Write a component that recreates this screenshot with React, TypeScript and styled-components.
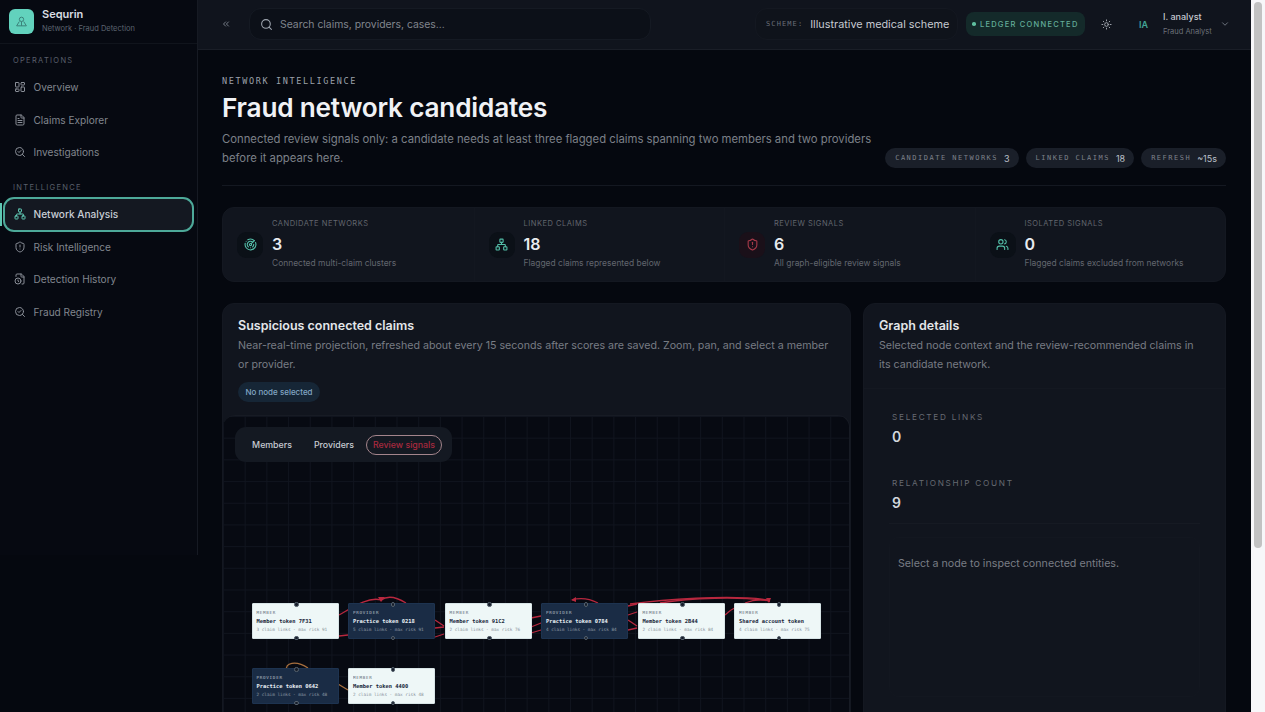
import React from "react";
import styled, { createGlobalStyle } from "styled-components";
import { LayoutDashboard, FileText, SearchCheck, Network, ShieldAlert, FileClock, Search, Sun, ChevronDown, ChevronsLeft, Users, Radar } from "lucide-react";

const sans = `"Inter", "Liberation Sans", sans-serif`;
const mono = `"DejaVu Sans Mono", "Liberation Mono", monospace`;

const Global = createGlobalStyle`
  html { background: #05080f; }
  body { margin: 0; background: #05080f; font-family: ${sans}; color: #e8ebf0; }
  * { box-sizing: border-box; }
`;

const Viewport = styled.div`
  height: 100vh;
  display: grid;
  grid-template-columns: 1fr 14px;
  overflow: hidden;
`;

const ScrollTrack = styled.div`
  background: #f7f7f9;
  padding: 2px 3px 0;
`;

const ScrollThumb = styled.div`
  height: 546px;
  border-radius: 4px;
  background: #c2c2c2;
`;

const Shell = styled.div`
  display: grid;
  grid-template-columns: 198px 1fr;
  min-height: 925px;
  align-items: start;
`;

const Sidebar = styled.aside`
  height: 555px;
  border-right: 1px solid #161a23;
  background: #060911;
`;

const Brand = styled.div`
  height: 44px;
  display: flex;
  align-items: center;
  gap: 8px;
  padding: 0 9px 1px;
  border-bottom: 1px solid #10141c;
`;

const LogoBox = styled.div`
  width: 25px;
  height: 25px;
  border-radius: 6px;
  background: #62d2bd;
  display: flex;
  align-items: center;
  justify-content: center;
  color: #3a8078;
`;

const BrandText = styled.div`
  display: flex;
  flex-direction: column;
  gap: 3px;
`;

const BrandName = styled.div`
  font-size: 11px;
  font-weight: 600;
  color: #d9dde3;
  line-height: 13px;
`;

const BrandSub = styled.div`
  font-size: 7.5px;
  color: #5c6470;
  line-height: 10px;
`;

const NavSection = styled.div<{ $top: number }>`
  padding-top: ${(p) => p.$top}px;
`;

const NavLabel = styled.div`
  font-size: 7.5px;
  letter-spacing: 1.3px;
  color: #595f6b;
  padding-left: 13px;
  line-height: 10px;
  height: 15px;
  text-transform: uppercase;
`;

const NavItem = styled.div<{ $active?: boolean }>`
  position: relative;
  height: 32.5px;
  display: flex;
  align-items: center;
  gap: 7.5px;
  padding-left: 14px;
  font-size: 10.1px;
  font-weight: ${(p) => (p.$active ? 500 : 400)};
  color: ${(p) => (p.$active ? "#c9ced6" : "#81868e")};
  svg { color: ${(p) => (p.$active ? "#5fc7b3" : "#8a8f98")}; flex: none; position: relative; }
  span { position: relative; }
  ${(p) =>
    p.$active &&
    `
    &::before {
      content: "";
      position: absolute;
      left: 3px;
      right: 3px;
      top: -1.5px;
      bottom: -1px;
      border: 2px solid #4da999;
      border-radius: 11px;
      background: #141821;
    }
    &::after {
      content: "";
      position: absolute;
      left: 0;
      top: 5px;
      bottom: 5px;
      width: 1.5px;
      background: #5fc7b3;
    }
  `}
`;

const Main = styled.div`
  min-width: 0;
`;

const Topbar = styled.header`
  height: 50px;
  background: #10141d;
  border-bottom: 1px solid #1a1e27;
  display: flex;
  align-items: center;
  padding: 0 21px 1px 23px;
`;

const Collapse = styled.div`
  color: #8a919c;
  width: 28px;
  display: flex;
  svg { display: block; }
`;

const SearchBox = styled.div`
  width: 402px;
  height: 32px;
  border-radius: 12px;
  background: #0c1018;
  border: 1px solid #151a23;
  display: flex;
  align-items: center;
  gap: 7px;
  padding-left: 10px;
  font-size: 10.4px;
  color: #80858d;
  svg { color: #9ea5af; }
`;

const TopRight = styled.div`
  margin-left: auto;
  display: flex;
  align-items: center;
`;

const Scheme = styled.div`
  width: 203px;
  height: 32px;
  border-radius: 12px;
  background: #0f131b;
  border: 1px solid #141821;
  display: flex;
  align-items: center;
  gap: 7px;
  padding-left: 10px;
`;

const SchemeKey = styled.span`
  font-family: ${mono};
  font-size: 7px;
  letter-spacing: 1.1px;
  color: #6a6f78;
`;

const SchemeVal = styled.span`
  font-size: 10.85px;
  color: #c6cad1;
  white-space: nowrap;
`;

const Ledger = styled.div`
  margin-left: 8px;
  width: 119px;
  height: 24px;
  border-radius: 8px;
  background: #142a2a;
  display: flex;
  align-items: center;
  justify-content: center;
  gap: 4px;
  font-size: 7.5px;
  font-weight: 500;
  letter-spacing: 1.25px;
  color: #63ad99;
  white-space: nowrap;
`;

const Dot = styled.span`
  width: 3.5px;
  height: 3.5px;
  border-radius: 50%;
  background: #5fbf9f;
`;

const SunWrap = styled.div`
  margin-left: 16px;
  width: 12px;
  display: flex;
  color: #a6acb5;
`;

const Initials = styled.div`
  margin-left: 26px;
  width: 24px;
  font-size: 9px;
  font-weight: 600;
  color: #41a597;
`;

const User = styled.div`
  width: 56px;
  display: flex;
  flex-direction: column;
  gap: 5px;
`;

const UserName = styled.div`
  font-size: 9px;
  font-weight: 500;
  line-height: 11px;
  color: #c6cad1;
`;

const UserRole = styled.div`
  font-size: 7.5px;
  line-height: 10px;
  color: #6c7179;
  white-space: nowrap;
`;

const Caret = styled.div`
  margin-left: 1px;
  display: flex;
  color: #7d848f;
`;

const Content = styled.main`
  padding: 26px 25px 0 24px;
`;

const Eyebrow = styled.div`
  font-family: ${mono};
  font-size: 8.5px;
  letter-spacing: 1.63px;
  line-height: 10px;
  color: #9ba1aa;
`;

const Header = styled.div`
  display: flex;
  justify-content: space-between;
  align-items: flex-end;
  padding-bottom: 17px;
  border-bottom: 1px solid #141821;
`;

const HeaderText = styled.div`
  width: 660px;
`;

const Title = styled.h1`
  margin: 4px 0 4px;
  font-size: 26.2px;
  font-weight: 600;
  line-height: 36px;
  color: #f0f2f5;
  letter-spacing: -0.2px;
`;

const Lead = styled.p`
  margin: 0;
  font-size: 11.3px;
  line-height: 19px;
  color: #7c8088;
`;

const Pills = styled.div`
  display: flex;
  gap: 7px;
`;

const Pill = styled.div`
  height: 20px;
  border-radius: 10px;
  background: #1a1f29;
  display: flex;
  align-items: center;
  gap: 6px;
  padding: 0 9px 0 10px;
`;

const PillKey = styled.span`
  font-family: ${mono};
  font-size: 7px;
  letter-spacing: 1.5px;
  color: #7d8189;
  white-space: nowrap;
`;

const PillVal = styled.span`
  font-size: 9px;
  color: #bcc1c9;
  white-space: nowrap;
`;

const Stats = styled.section`
  margin-top: 21px;
  height: 75px;
  border-radius: 12px;
  background: #11151e;
  border: 1px solid #141821;
  display: grid;
  grid-template-columns: repeat(4, 1fr);
`;

const Stat = styled.div<{ $first?: boolean }>`
  display: flex;
  align-items: center;
  gap: 9px;
  padding-left: 14px;
  border-left: ${(p) => (p.$first ? "none" : "1px solid #131720")};
`;

const StatIcon = styled.div<{ $danger?: boolean }>`
  width: 26px;
  height: 26px;
  border-radius: 9px;
  flex: none;
  display: flex;
  align-items: center;
  justify-content: center;
  background: ${(p) => (p.$danger ? "#1a1019" : "#0b1017")};
  color: ${(p) => (p.$danger ? "#a83a4a" : "#54bfa9")};
`;

const StatBody = styled.div`
  display: flex;
  flex-direction: column;
  padding-bottom: 2px;
`;

const StatLabel = styled.div`
  font-size: 7.5px;
  letter-spacing: 0.5px;
  line-height: 10px;
  color: #62666e;
`;

const StatValue = styled.div`
  font-size: 16px;
  font-weight: 600;
  line-height: 22px;
  margin: 4px 0 3px;
  color: #e8ebef;
`;

const StatSub = styled.div`
  font-size: 8.45px;
  line-height: 10px;
  color: #62666e;
  white-space: nowrap;
`;

const Columns = styled.div`
  margin-top: 21px;
  display: grid;
  grid-template-columns: 629px 363px;
  gap: 12px;
`;

const Panel = styled.section`
  border-radius: 12px 12px 0 0;
  background: #11151e;
  border: 1px solid #141821;
  height: 600px;
  overflow: hidden;
`;

const PanelHead = styled.div<{ $side?: boolean }>`
  padding: 13px ${(p) => (p.$side ? "24px" : "15px")} 0 15px;
  height: ${(p) => (p.$side ? "84px" : "111px")};
`;

const PanelTitle = styled.h2`
  margin: 0;
  font-size: 12.5px;
  font-weight: 600;
  line-height: 17px;
  color: #e3e6ea;
`;

const PanelDesc = styled.p`
  margin: 2px 0 0;
  font-size: 10.65px;
  line-height: 19px;
  color: #787c84;
`;

const Chip = styled.div`
  margin-top: 8px;
  width: 82px;
  height: 20px;
  border-radius: 10px;
  background: #162636;
  display: flex;
  align-items: center;
  justify-content: center;
  font-size: 8px;
  font-weight: 500;
  color: #82a6c4;
  white-space: nowrap;
`;

const Canvas = styled.div`
  position: relative;
  height: 400px;
  border-radius: 12px 12px 0 0;
  border-top: 1px solid #171b24;
  border-right: 1px solid #171b24;
  background-color: #070a12;
  background-image:
    linear-gradient(#10141e 1px, transparent 1px),
    linear-gradient(90deg, #10141e 1px, transparent 1px);
  background-size: 21.7px 21.7px;
`;

const Toolbar = styled.div`
  position: absolute;
  left: 12px;
  top: 11px;
  width: 217px;
  height: 35px;
  border-radius: 11px;
  background: #141922;
  display: flex;
  align-items: center;
  padding-left: 7px;
`;

const ToolBtn = styled.div<{ $w: number; $danger?: boolean }>`
  width: ${(p) => p.$w}px;
  height: 20px;
  margin-right: ${(p) => (p.$danger ? 0 : 1)}px;
  display: flex;
  align-items: center;
  justify-content: center;
  font-size: 8.8px;
  font-weight: 500;
  white-space: nowrap;
  color: ${(p) => (p.$danger ? "#a8293f" : "#c8ccd3")};
  border-radius: 10px;
  border: ${(p) => (p.$danger ? "1px solid #a4858c" : "1px solid transparent")};
`;

const EdgeLayer = styled.svg`
  position: absolute;
  inset: 0;
  width: 100%;
  height: 100%;
  pointer-events: none;
`;

const GraphNode = styled.div<{ $dark?: boolean }>`
  position: absolute;
  width: 87px;
  height: 36px;
  border-radius: 1px;
  padding: 6px 4px 0;
  font-family: ${mono};
  background: ${(p) => (p.$dark ? "#1a2c45" : "#eef7f7")};
  color: ${(p) => (p.$dark ? "#eaf1f6" : "#17263a")};
  border: 1px solid ${(p) => (p.$dark ? "#1d3350" : "#d7e4e6")};
  &::before, &::after {
    content: "";
    position: absolute;
    left: 41.5px;
    width: 2.5px;
    height: 2.5px;
    border-radius: 50%;
    background: #161d2a;
    border: 0.5px solid #56626e;
  }
  &::before { top: -2px; }
  &::after { bottom: -2px; }
`;

const NodeKind = styled.div`
  font-size: 4.2px;
  letter-spacing: 0.75px;
  line-height: 6px;
  opacity: 0.7;
`;

const NodeName = styled.div`
  font-size: 5.4px;
  font-weight: 700;
  line-height: 10px;
  white-space: nowrap;
`;

const NodeMeta = styled.div`
  font-size: 4.35px;
  line-height: 8px;
  opacity: 0.5;
  white-space: nowrap;
`;

const SideStats = styled.div`
  border-top: 1px solid #141821;
`;

const SideStat = styled.div`
  height: 66px;
  padding: 23px 0 0 28px;
`;

const SideLabel = styled.div`
  font-size: 8.2px;
  letter-spacing: 1.73px;
  line-height: 11px;
  color: #666a72;
`;

const SideValue = styled.div`
  font-size: 14px;
  font-weight: 600;
  line-height: 18px;
  margin-top: 5px;
  color: #d3d7dc;
`;

const SideDivider = styled.div`
  height: 1px;
  margin: 2px 25px 0;
  background: #161a23;
`;

const EmptyBox = styled.div`
  margin: 13px 25px 0;
  height: 160px;
  padding: 19px 8px;
  border: 1px solid #131720;
  border-radius: 10px;
  font-size: 10.7px;
  line-height: 14px;
  color: #797d85;
`;

const LogoIcon = () => (
  <svg width="13" height="13" viewBox="0 0 24 24" fill="none" stroke="currentColor" strokeWidth="1.8">
    <circle cx="12" cy="8" r="4" />
    <path d="M3 20l5-8M21 20l-5-8M3 20h18M12 12v8" />
  </svg>
);

const nodes = [
  { x: 251.5, y: 603, dark: false, kind: "MEMBER", name: "Member token 7F31", meta: "3 claim links · max risk 91" },
  { x: 348, y: 603, dark: true, kind: "PROVIDER", name: "Practice token 0218", meta: "5 claim links · max risk 91" },
  { x: 444.5, y: 603, dark: false, kind: "MEMBER", name: "Member token 91C2", meta: "2 claim links · max risk 76" },
  { x: 541, y: 603, dark: true, kind: "PROVIDER", name: "Practice token 0784", meta: "4 claim links · max risk 84" },
  { x: 637.5, y: 603, dark: false, kind: "MEMBER", name: "Member token 2B44", meta: "2 claim links · max risk 84" },
  { x: 734, y: 603, dark: false, kind: "MEMBER", name: "Shared account token", meta: "4 claim links · max risk 75" },
  { x: 251.5, y: 668, dark: true, kind: "PROVIDER", name: "Practice token 0642", meta: "2 claim links · max risk 48" },
  { x: 348, y: 668, dark: false, kind: "MEMBER", name: "Member token 4400", meta: "2 claim links · max risk 48" },
];

const redEdges = [
  "M339 615 C350 609 368 596 381 600",
  "M381 600 C388 595 398 598 406 603",
  "M339 636 L348 635",
  "M435 620 L444 626",
  "M435 628 L444 627",
  "M435 637 L444 634",
  "M531 618 L541 616",
  "M531 627 L541 623",
  "M531 633 L541 630",
  "M598 603 C590 599 582 597 572 600",
  "M628 606 L637 604",
  "M628 615 L637 612",
  "M628 620 L637 626",
  "M628 630 L637 628",
  "M630 604 C660 600 730 594 768 600",
  "M660 603 C690 598 740 596 770 601",
  "M725 615 C730 610 734 608 738 606",
  "M745 603 C755 599 762 599 770 601",
];

const brownEdges = ["M287 670 C284 663 296 660 308 668", "M338 684 L348 690"];

const origin = { x: 223, y: 416 };

export default function App() {
  return (
    <Viewport>
      <Global />
      <Shell>
        <Sidebar>
          <Brand>
            <LogoBox>
              <LogoIcon />
            </LogoBox>
            <BrandText>
              <BrandName>Sequrin</BrandName>
              <BrandSub>Network · Fraud Detection</BrandSub>
            </BrandText>
          </Brand>
          <NavSection $top={12}>
            <NavLabel>Operations</NavLabel>
            <NavItem><LayoutDashboard size={12} /><span>Overview</span></NavItem>
            <NavItem><FileText size={12} /><span>Claims Explorer</span></NavItem>
            <NavItem><SearchCheck size={12} /><span>Investigations</span></NavItem>
          </NavSection>
          <NavSection $top={14.5}>
            <NavLabel>Intelligence</NavLabel>
            <NavItem $active><Network size={12} /><span>Network Analysis</span></NavItem>
            <NavItem><ShieldAlert size={12} /><span>Risk Intelligence</span></NavItem>
            <NavItem><FileClock size={12} /><span>Detection History</span></NavItem>
            <NavItem><SearchCheck size={12} /><span>Fraud Registry</span></NavItem>
          </NavSection>
        </Sidebar>
        <Main>
          <Topbar>
            <Collapse><ChevronsLeft size={10} /></Collapse>
            <SearchBox><Search size={13} />Search claims, providers, cases...</SearchBox>
            <TopRight>
              <Scheme>
                <SchemeKey>SCHEME:</SchemeKey>
                <SchemeVal>Illustrative medical scheme</SchemeVal>
              </Scheme>
              <Ledger><Dot />LEDGER CONNECTED</Ledger>
              <SunWrap><Sun size={11} /></SunWrap>
              <Initials>IA</Initials>
              <User>
                <UserName>I. analyst</UserName>
                <UserRole>Fraud Analyst</UserRole>
              </User>
              <Caret><ChevronDown size={10} /></Caret>
            </TopRight>
          </Topbar>
          <Content>
            <Header>
              <HeaderText>
                <Eyebrow>NETWORK INTELLIGENCE</Eyebrow>
                <Title>Fraud network candidates</Title>
                <Lead>
                  Connected review signals only: a candidate needs at least three flagged claims spanning two members and two providers before it appears here.
                </Lead>
              </HeaderText>
              <Pills>
                <Pill><PillKey>CANDIDATE NETWORKS</PillKey><PillVal>3</PillVal></Pill>
                <Pill><PillKey>LINKED CLAIMS</PillKey><PillVal>18</PillVal></Pill>
                <Pill><PillKey>REFRESH</PillKey><PillVal>~15s</PillVal></Pill>
              </Pills>
            </Header>
            <Stats>
              <Stat $first>
                <StatIcon><Radar size={13} /></StatIcon>
                <StatBody>
                  <StatLabel>CANDIDATE NETWORKS</StatLabel>
                  <StatValue>3</StatValue>
                  <StatSub>Connected multi-claim clusters</StatSub>
                </StatBody>
              </Stat>
              <Stat>
                <StatIcon><Network size={13} /></StatIcon>
                <StatBody>
                  <StatLabel>LINKED CLAIMS</StatLabel>
                  <StatValue>18</StatValue>
                  <StatSub>Flagged claims represented below</StatSub>
                </StatBody>
              </Stat>
              <Stat>
                <StatIcon $danger><ShieldAlert size={13} /></StatIcon>
                <StatBody>
                  <StatLabel>REVIEW SIGNALS</StatLabel>
                  <StatValue>6</StatValue>
                  <StatSub>All graph-eligible review signals</StatSub>
                </StatBody>
              </Stat>
              <Stat>
                <StatIcon><Users size={13} /></StatIcon>
                <StatBody>
                  <StatLabel>ISOLATED SIGNALS</StatLabel>
                  <StatValue>0</StatValue>
                  <StatSub>Flagged claims excluded from networks</StatSub>
                </StatBody>
              </Stat>
            </Stats>
            <Columns>
              <Panel>
                <PanelHead>
                  <PanelTitle>Suspicious connected claims</PanelTitle>
                  <PanelDesc>
                    Near-real-time projection, refreshed about every 15 seconds after scores are saved. Zoom, pan, and select a member or provider.
                  </PanelDesc>
                  <Chip>No node selected</Chip>
                </PanelHead>
                <Canvas>
                  <EdgeLayer>
                    <g transform={`translate(${-origin.x},${-origin.y})`} fill="none" strokeWidth="1.3">
                      {redEdges.map((d) => <path key={d} d={d} stroke="#b8283f" />)}
                      {brownEdges.map((d) => <path key={d} d={d} stroke="#a8703f" />)}
                      <path d="M378 597 L385 597 L381 602 Z" fill="#b8283f" />
                      <path d="M571 600 L576 597 L576 602 Z" fill="#b8283f" />
                      <path d="M766 598 L771 598 L769 603 Z" fill="#b8283f" />
                    </g>
                  </EdgeLayer>
                  <Toolbar>
                    <ToolBtn $w={60}>Members</ToolBtn>
                    <ToolBtn $w={62}>Providers</ToolBtn>
                    <ToolBtn $w={76} $danger>Review signals</ToolBtn>
                  </Toolbar>
                  {nodes.map((n) => (
                    <GraphNode key={n.name} $dark={n.dark} style={{ left: n.x - origin.x, top: n.y - origin.y }}>
                      <NodeKind>{n.kind}</NodeKind>
                      <NodeName>{n.name}</NodeName>
                      <NodeMeta>{n.meta}</NodeMeta>
                    </GraphNode>
                  ))}
                </Canvas>
              </Panel>
              <Panel>
                <PanelHead $side>
                  <PanelTitle>Graph details</PanelTitle>
                  <PanelDesc>Selected node context and the review-recommended claims in its candidate network.</PanelDesc>
                </PanelHead>
                <SideStats>
                  <SideStat>
                    <SideLabel>SELECTED LINKS</SideLabel>
                    <SideValue>0</SideValue>
                  </SideStat>
                  <SideStat>
                    <SideLabel>RELATIONSHIP COUNT</SideLabel>
                    <SideValue>9</SideValue>
                  </SideStat>
                  <SideDivider />
                  <EmptyBox>Select a node to inspect connected entities.</EmptyBox>
                </SideStats>
              </Panel>
            </Columns>
          </Content>
        </Main>
      </Shell>
      <ScrollTrack>
        <ScrollThumb />
      </ScrollTrack>
    </Viewport>
  );
}
